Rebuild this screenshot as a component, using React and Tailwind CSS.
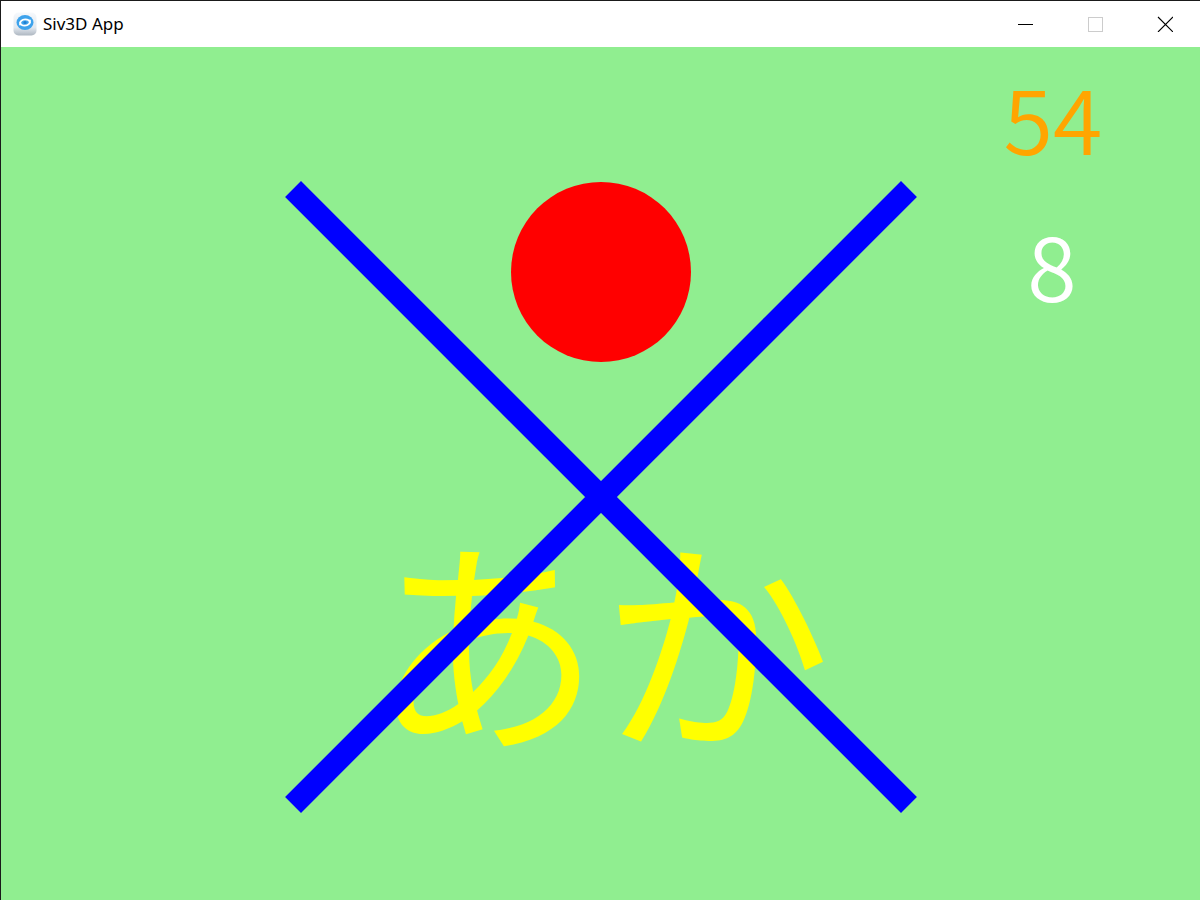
import React from 'react';

const TitleIcon = () => (
  <svg width="24" height="24" viewBox="0 0 24 24">
    <defs>
      <linearGradient id="tile" x1="0" y1="0" x2="0" y2="1">
        <stop offset="0" stopColor="#f6f9fc" />
        <stop offset="0.65" stopColor="#e2e8ef" />
        <stop offset="1" stopColor="#aeb7c1" />
      </linearGradient>
    </defs>
    <rect x="0.5" y="0.5" width="23" height="23" rx="5" fill="url(#tile)" />
    <ellipse cx="12" cy="10.5" rx="8.5" ry="7.5" fill="#3ea3ec" />
    <path d="M7 12.5c-0.5-2.8 2-5.2 5.2-5.2c2.6 0 4.4 1.4 4.6 3.2" fill="none" stroke="#ffffff" strokeWidth="1.8" strokeLinecap="round" />
    <path d="M17 8.5c0.5 2.8-2 5.2-5.2 5.2c-2.6 0-4.4-1.4-4.6-3.2" fill="none" stroke="#ffffff" strokeWidth="1.8" strokeLinecap="round" />
    <circle cx="12" cy="10.5" r="1.5" fill="#1f7fd0" />
  </svg>
);

const App = () => {
  return (
    <div className="w-[1200px] h-[900px] flex flex-col border-l border-t border-[#1a1a1a] overflow-hidden">
      {/* Window title bar */}
      <header className="h-[46px] shrink-0 bg-white flex items-center">
        <div className="pl-[12px] pr-[6px] flex items-center">
          <TitleIcon />
        </div>
        <span className="text-[17px] text-black font-['Segoe_UI','Noto_Sans','Liberation_Sans',sans-serif]">Siv3D App</span>
        <div className="ml-auto flex h-full">
          <button className="w-[70px] h-full flex items-center justify-center">
            <svg width="16" height="16" viewBox="0 0 16 16">
              <path d="M1 8.5h15" stroke="#000" strokeWidth="1" />
            </svg>
          </button>
          <button className="w-[70px] h-full flex items-center justify-center">
            <svg width="16" height="16" viewBox="0 0 16 16">
              <rect x="1.5" y="1.5" width="14" height="14" fill="none" stroke="#cccccc" strokeWidth="1" />
            </svg>
          </button>
          <button className="w-[70px] h-full flex items-center justify-center">
            <svg width="16" height="16" viewBox="0 0 16 16">
              <path d="M1 1l15 15M16 1L1 16" stroke="#000" strokeWidth="1.1" />
            </svg>
          </button>
        </div>
      </header>

      {/* Scene */}
      <main className="flex-1 relative bg-[#90ee90] font-['Noto_Sans_CJK_JP','Noto_Sans',sans-serif]">
        <div className="absolute left-[600px] top-[587px] -translate-x-1/2 -translate-y-1/2 text-[230px] leading-none text-[#ffff00] whitespace-nowrap">
          あか
        </div>

        <svg className="absolute left-0 top-0" width="1199" height="853" viewBox="0 0 1199 853">
          <circle cx="600" cy="225" r="90" fill="#ff0000" />
          <path d="M300 150L900 750M900 150L300 750" stroke="#0000ff" strokeWidth="22.5" strokeLinecap="square" />
        </svg>

        <div className="absolute left-[1052px] top-[69px] -translate-x-1/2 -translate-y-1/2 text-[90px] font-[350] leading-none text-[#ffa500]">
          54
        </div>
        <div className="absolute left-[1051px] top-[216px] -translate-x-1/2 -translate-y-1/2 text-[90px] font-[350] leading-none text-white">
          8
        </div>
      </main>
    </div>
  );
};

export default App;
